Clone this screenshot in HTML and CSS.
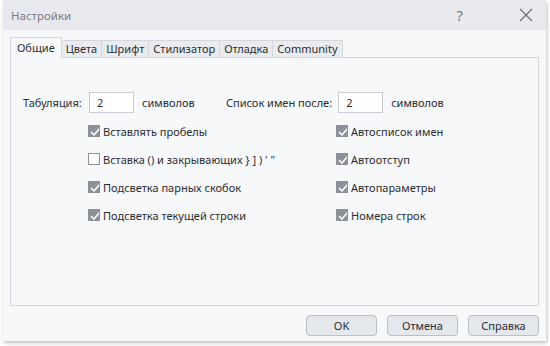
FILE: index.html
```html
<!DOCTYPE html>
<html lang="ru">
<head>
    <meta charset="UTF-8">
    <title>Настройки</title>
    <link rel="stylesheet" href="styles.css">
</head>
<body>

<div class="dialog">
    <!-- Title bar -->
    <div class="titlebar">
        <span class="title">Настройки</span>
        <span class="help">?</span>
        <svg class="close" width="14" height="14" viewBox="0 0 14 14">
            <path d="M1 1 L13 13 M13 1 L1 13" stroke="#6b6e75" stroke-width="1.2" fill="none"/>
        </svg>
    </div>

    <div class="content">
        <!-- Tabs -->
        <div class="tabs">
            <div class="tab active">Общие</div>
            <div class="tab">Цвета</div>
            <div class="tab">Шрифт</div>
            <div class="tab">Стилизатор</div>
            <div class="tab">Отладка</div>
            <div class="tab">Community</div>
        </div>

        <div class="panel">
            <div class="row fields">
                <label class="lbl lbl-tab">Табуляция:</label>
                <div class="input">2</div>
                <span class="unit">символов</span>
                <label class="lbl lbl-list">Список имен после:</label>
                <div class="input">2</div>
                <span class="unit">символов</span>
            </div>

            <div class="options">
                <div class="col left">
                    <div class="check on"><span class="box"></span>Вставлять пробелы</div>
                    <div class="check"><span class="box"></span>Вставка () и закрывающих } ] ) ' "</div>
                    <div class="check on"><span class="box"></span>Подсветка парных скобок</div>
                    <div class="check on"><span class="box"></span>Подсветка текущей строки</div>
                </div>
                <div class="col right">
                    <div class="check on"><span class="box"></span>Автосписок имен</div>
                    <div class="check on"><span class="box"></span>Автоотступ</div>
                    <div class="check on"><span class="box"></span>Автопараметры</div>
                    <div class="check on"><span class="box"></span>Номера строк</div>
                </div>
            </div>
        </div>

        <!-- Buttons -->
        <div class="buttons">
            <button class="button">OK</button>
            <button class="button">Отмена</button>
            <button class="button">Справка</button>
        </div>
    </div>
</div>

</body>
</html>
```

FILE: styles.css
```css
/* Reset */
* {
    margin: 0;
    padding: 0;
    box-sizing: border-box;
}

body {
    font-family: 'Noto Sans', 'Open Sans', sans-serif;
    font-size: 11px;
    color: #2b2d31;
    background-color: #ffffff;
    width: 550px;
    height: 346px;
    overflow: hidden;
}

/* Dialog window */
.dialog {
    margin-left: 3px;
    width: 543px;
    height: 341px;
    background-color: #f7f8fa;
    box-shadow: 1px 2px 4px rgba(0, 0, 0, 0.25);
    display: flex;
    flex-direction: column;
}

.titlebar {
    height: 30px;
    background-color: #e8e9ee;
    display: flex;
    align-items: center;
    padding-left: 8px;
}

.title {
    font-size: 11.5px;
    color: #7a7c82;
    flex: 1;
}

.help {
    font-size: 15px;
    color: #7a7c82;
    margin-right: 56px;
}

.close {
    margin-right: 13px;
}

.content {
    flex: 1;
    padding: 7px 7px 0 7px;
    display: flex;
    flex-direction: column;
}

/* Tabs */
.tabs {
    display: flex;
    align-items: flex-end;
    height: 20px;
    position: relative;
    z-index: 1;
}

.tab {
    height: 17px;
    padding: 0 4px;
    border: 1px solid #d3d6dc;
    border-left: none;
    border-bottom: none;
    background-color: #e9ebef;
    line-height: 16px;
    white-space: nowrap;
}

.tab.active {
    height: 21px;
    margin-bottom: -1px;
    border-left: 1px solid #d3d6dc;
    background-color: #f7f8fa;
    padding: 0 6px;
    line-height: 20px;
}

.panel {
    height: 249px;
    border: 1px solid #d3d6dc;
    padding: 34px 0 0 12px;
}

.row {
    display: flex;
    align-items: center;
}

.row > * {
    flex-shrink: 0;
    white-space: nowrap;
}

.lbl-tab {
    width: 66px;
}

.input {
    width: 45px;
    height: 21px;
    border: 1px solid #c9ced6;
    background-color: #ffffff;
    padding: 2px 0 0 7px;
}

.unit {
    margin-left: 8px;
    width: 84px;
}

.lbl-list {
    margin-right: 6px;
}

/* Checkboxes */
.options {
    display: flex;
    margin-top: 9px;
}

.col {
    display: flex;
    flex-direction: column;
    gap: 10px;
}

.col.left {
    margin-left: 65px;
    width: 248px;
}

.check {
    display: flex;
    align-items: center;
    height: 18px;
    white-space: nowrap;
}

.box {
    width: 12px;
    height: 12px;
    margin-right: 3px;
    border: 1px solid #8c9099;
    background-color: #ffffff;
}

.check.on .box {
    background-color: #8c9099;
    background-image: url("data:image/svg+xml;utf8,<svg xmlns='http://www.w3.org/2000/svg' width='12' height='12' viewBox='0 0 12 12'><path d='M2 6 L5 9 L10.5 2.5' stroke='white' stroke-width='1.5' fill='none'/></svg>");
}

/* Buttons */
.buttons {
    display: flex;
    justify-content: flex-end;
    gap: 10px;
    padding-top: 9px;
}

.button {
    width: 71px;
    height: 21px;
    font-family: inherit;
    font-size: 11px;
    color: #2b2d31;
    background-color: #e4e7ec;
    border: 1px solid #b9bec7;
    border-radius: 4px;
}
```
